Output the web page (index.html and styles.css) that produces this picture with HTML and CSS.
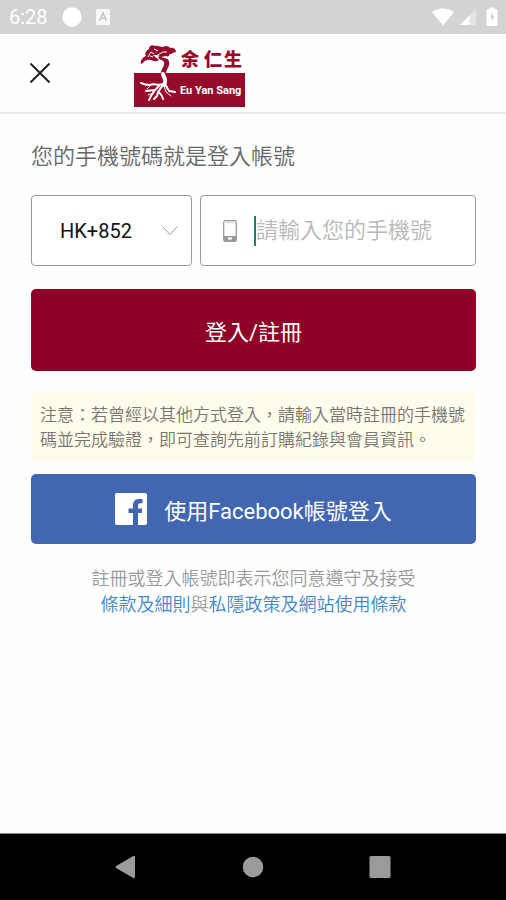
FILE: index.html
```html
<!DOCTYPE html>
<html lang="zh-Hant">
<head>
<meta charset="utf-8">
<meta name="viewport" content="width=device-width, initial-scale=1">
<title>登入/註冊</title>
<link rel="stylesheet" href="styles.css">
</head>
<body>
<div class="status-bar">
  <div class="status-group">
    <span class="clock">6:28</span>
    <svg class="status-dot" viewBox="0 0 20 20"><circle cx="10" cy="10" r="9.7"/></svg>
    <svg class="status-app" viewBox="0 0 14 16"><rect width="14" height="16" rx="1.5" fill="#f8f8f8"/><path d="M3.5 12 7 4l3.500 8M5 9.300h4" fill="none" stroke="#c4c4c4" stroke-width="1.500"/></svg>
  </div>
  <div class="status-group status-right">
    <svg class="wifi" viewBox="0 0 22 18"><path d="M0 4.200C6.500-.8 15.500-.8 22 4.200L11 17.500Z"/></svg>
    <svg class="signal" viewBox="0 0 16 16"><path d="M16 0V16H0Z" opacity=".4"/><path d="M9.500 6.500V16H0Z"/></svg>
    <svg class="battery" viewBox="0 0 12 20"><path d="M3.500 2V.5h5V2H10a1.500 1.500 0 0 1 1.500 1.500v14A1.500 1.500 0 0 1 10 19H2A1.500 1.500 0 0 1 .5 17.500v-14A1.500 1.500 0 0 1 2 2Z"/><path d="M6.800 5 4 10.800h2.200V15L8.500 9.200H6.800Z" fill="#cfcfcf"/></svg>
  </div>
</div>

<header class="header">
  <button class="close" type="button" aria-label="關閉">
    <svg viewBox="0 0 20 20"><path d="M.5.500 19.500 19.500M19.500.500.500 19.500"/></svg>
  </button>
  <svg class="logo" viewBox="0 0 111 64" role="img" aria-label="余仁生 Eu Yan Sang">
    <rect y="30" width="111" height="34" fill="#970a2c"/>
    <g fill="#970a2c">
      <path d="M7 21C6 17 9 14 12 13C10 10 13 7 15 6C15 3 18 1 21 3C24 2 26 4 29 4C32 2 35 3 36 5C40 4 42 7 42 9C39 9 38 12 35 11C36 13 34 14 32 13L27 14L24 12L19 12L25 17C22 19 19 18 17 17C13 16 10 18 9 20Z"/>
      <path d="M26 13C29 16 35 14 35 19C36 23 33 25 32 30H27C27 26 31 23 30 19C29 17 25 17 24 14Z"/>
    </g>
    <path d="M14 14 17 9 20 11M20 6 24 8M22 13 29 9 33 9M19 14 16 13" fill="none" stroke="#fff" stroke-width="1"/>
    <g fill="none" stroke="#fff" stroke-linecap="round" stroke-linejoin="round">
      <path stroke-width="4" d="M29 31C30 36 33 36 30 42"/>
      <path stroke-width="2" d="M29 41C24 43 20 40 16 42C12 42 9 41 7 40M26 42 21 47 12 48M21 47 17 53 15 57M29 42 24 49 23 53 20 56M25 49 28 53 29 56M31 41 35 48 41 49"/>
      <path stroke-width="1" d="M17 42 13 46M30 43 32 49 37 53M19 50 14 52"/>
    </g>
    <text class="logo-zh" x="47 70 90" y="23">余仁生</text>
    <text class="logo-en" x="46" y="51">Eu Yan Sang</text>
  </svg>
</header>

<main class="main">
  <form class="login">
    <label class="title" for="phone">您的手機號碼就是登入帳號</label>
    <div class="fields">
      <div class="region">
        <select aria-label="地區代碼"><option>HK+852</option></select>
        <svg class="chevron" viewBox="0 0 16 10"><path d="M.5.500 8 8.500 15.500.500"/></svg>
      </div>
      <div class="phone">
        <svg class="phone-icon" viewBox="0 0 14 22"><rect x=".7" y=".7" width="12.600" height="20.600" rx="1.500" fill="none" stroke="#999" stroke-width="1.300"/><path d="M1 16h12v5H1Z" fill="#999"/><path d="M3 2.500h8" stroke="#ccc"/><rect x="5" y="17.500" width="4" height="2" fill="#fff"/></svg>
        <span class="caret"></span>
        <input id="phone" type="tel" placeholder="請輸入您的手機號">
      </div>
    </div>
    <button class="btn submit" type="submit">登入/註冊</button>
    <p class="notice">注意：若曾經以其他方式登入，請輸入當時註冊的手機號碼並完成驗證，即可查詢先前訂購紀錄與會員資訊。</p>
    <button class="btn facebook" type="button">
      <svg class="fb-icon" viewBox="0 0 32 32"><rect width="32" height="32" rx="2" fill="#fff"/><path d="M18 32V20h-4.500v-4.500H18V12.500c0-4.500 2.500-6.500 6-6.500h3.500v4.200h-2.200c-1.800 0-2.300 1-2.300 2.300v3h4.300l-.6 4.500H23v12Z" fill="#4267b0"/></svg>
      <span>使用Facebook帳號登入</span>
    </button>
    <p class="terms">註冊或登入帳號即表示您同意遵守及接受<br><a href="#terms">條款及細則</a>與<a href="#privacy">私隱政策及網站使用條款</a></p>
  </form>
</main>

<nav class="nav-bar" aria-label="系統導覽">
  <button type="button" aria-label="返回"><svg viewBox="0 0 24 24"><path d="M21 2V22Q21 24 19.300 23L2.500 13.200Q.5 12 2.500 10.800L19.300 1Q21 0 21 2Z"/></svg></button>
  <button type="button" aria-label="主畫面"><svg viewBox="0 0 24 24"><circle cx="12" cy="12" r="10.300"/></svg></button>
  <button type="button" aria-label="最近使用"><svg viewBox="0 0 24 24"><rect x="1.500" y="1" width="21" height="22" rx="1.500"/></svg></button>
</nav>
</body>
</html>
```
FILE: styles.css
```css
* {
  box-sizing: border-box;
}

body {
  margin: 0;
  min-height: 100vh;
  display: flex;
  flex-direction: column;
  background: #fefefe;
  font-family: Roboto, "Noto Sans CJK TC", sans-serif;
}

button,
input,
select {
  font: inherit;
}

button {
  border: 0;
  padding: 0;
  background: none;
}

svg {
  display: block;
  flex: none;
}

.status-bar {
  height: 34px;
  padding: 0 8px 0 9px;
  display: flex;
  align-items: center;
  justify-content: space-between;
  background: #d3d3d3;
  color: #fff;
  fill: #fff;
}

.status-group {
  display: flex;
  align-items: center;
  gap: 14px;
}

.status-right {
  gap: 6px;
}

.clock {
  font-size: 20px;
}

.status-dot {
  width: 20px;
  height: 20px;
}

.status-app {
  width: 14px;
  height: 16px;
}

.wifi {
  width: 22px;
  height: 18px;
}

.signal {
  width: 16px;
  height: 16px;
}

.battery {
  width: 12px;
  height: 20px;
  margin-left: 4px;
}

.header {
  height: 80px;
  padding: 0 30px;
  display: flex;
  align-items: center;
  gap: 84px;
  border-bottom: 2px solid #e9e9e9;
}

.close svg {
  width: 20px;
  height: 20px;
  fill: none;
  stroke: #222;
  stroke-width: 2;
}

.logo {
  width: 111px;
  height: 64px;
  margin-top: 4px;
  overflow: visible;
}

.logo-zh {
  font: 900 18px "Noto Sans CJK TC", sans-serif;
  fill: #970a2c;
}

.logo-en {
  font: 700 11px Roboto, sans-serif;
  fill: #fff;
}

.main {
  flex: 1;
  padding: 26px 30px 0 31px;
}

.login {
  display: flex;
  flex-direction: column;
}

.title {
  font-size: 22px;
  line-height: 34px;
  font-weight: 350;
  color: #666;
}

.fields {
  display: grid;
  grid-template-columns: 7fr 12fr;
  gap: 8px;
  margin: 21px 0 23px;
}

.region,
.phone {
  height: 71px;
  border: 1px solid #999;
  border-radius: 4px;
  background: #fff;
}

.region {
  position: relative;
}

.region select {
  width: 100%;
  height: 100%;
  padding: 0 28px;
  border: 0;
  appearance: none;
  background: none;
  font-size: 20px;
  color: #111;
}

.chevron {
  position: absolute;
  right: 13px;
  top: 30px;
  width: 16px;
  height: 10px;
  fill: none;
  stroke: #999;
  pointer-events: none;
}

.phone {
  min-width: 0;
  display: flex;
  align-items: center;
  padding: 0 12px 0 22px;
}

.phone-icon {
  width: 14px;
  height: 22px;
}

.caret {
  width: 2px;
  height: 30px;
  margin-left: 17px;
  background: #16806c;
}

.phone input {
  flex: 1;
  min-width: 0;
  padding: 0;
  border: 0;
  outline: 0;
  background: none;
  font-size: 22px;
  font-weight: 350;
}

.phone input::placeholder {
  color: #b8b8b8;
  opacity: 1;
}

.btn {
  border-radius: 5px;
  color: #fff;
  font-size: 22px;
}

.submit {
  height: 82px;
  background: #8e0026;
}

.notice {
  margin: 21px 0 12px;
  padding: 11px 9px 9px;
  background: #fffced;
  color: #77776f;
  font-size: 17px;
  font-weight: 350;
  line-height: 25px;
}

.facebook {
  height: 70px;
  display: flex;
  align-items: center;
  justify-content: center;
  gap: 17px;
  background: #4267b0;
}

.fb-icon {
  width: 32px;
  height: 32px;
}

.terms {
  margin: 22px 0 0;
  font-size: 18px;
  line-height: 26px;
  font-weight: 350;
  text-align: center;
  color: #999;
}

.terms a {
  color: #4088c7;
  text-decoration: none;
}

.nav-bar {
  height: 67px;
  padding: 0 62px;
  display: grid;
  grid-template-columns: repeat(3, 1fr);
  background: #000;
  border-top: 1px solid #888;
}

.nav-bar button {
  display: flex;
  align-items: center;
  justify-content: center;
}

.nav-bar svg {
  width: 24px;
  height: 24px;
  fill: #9b9b9b;
}
```
